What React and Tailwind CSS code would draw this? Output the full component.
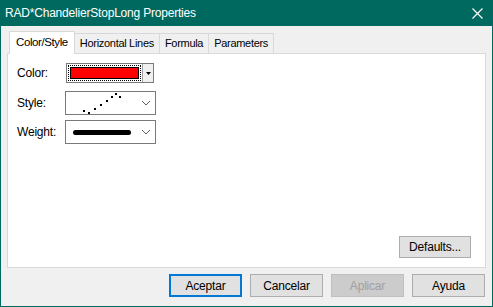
import React from "react";

const tabs = ["Color/Style", "Horizontal Lines", "Formula", "Parameters"];

const styleDots = [
  [2, 17],
  [7, 19],
  [13, 15],
  [19, 11],
  [25, 7],
  [30, 3],
  [34, 0],
  [38, 3],
];

function Chevron() {
  return (
    <svg width="10" height="6" viewBox="0 0 10 6" className="text-[#606060]">
      <path d="M1 1 L5 5 L9 1" fill="none" stroke="currentColor" strokeWidth="1" />
    </svg>
  );
}

function Btn({ children, primary, disabled }) {
  return (
    <button
      className={
        primary
          ? "w-[73px] h-[23px] border-2 border-[#0078d7] bg-[#e1e1e1] text-[12px] tracking-[-0.2px] text-black"
          : disabled
          ? "w-[73px] h-[23px] border border-[#bfbfbf] bg-[#cccccc] text-[12px] tracking-[-0.2px] text-[#a0a0a0]"
          : "w-[73px] h-[23px] border border-[#adadad] bg-[#e1e1e1] text-[12px] tracking-[-0.2px] text-black"
      }
    >
      {children}
    </button>
  );
}

export default function App() {
  return (
    <div
      className="w-[493px] h-[307px] flex flex-col bg-[#f0f0f0] overflow-hidden"
      style={{ fontFamily: '"Liberation Sans", Arial, sans-serif' }}
    >
      {/* Title bar */}
      <div className="h-[26px] shrink-0 bg-[#00695f] flex items-center justify-between pl-[5px] pr-[10px]">
        <span className="text-white text-[12px] tracking-[-0.2px]">RAD*ChandelierStopLong Properties</span>
        <svg width="11" height="11" viewBox="0 0 11 11">
          <path d="M0.5 0.5 L10.5 10.5 M10.5 0.5 L0.5 10.5" stroke="white" strokeWidth="1.2" />
        </svg>
      </div>

      {/* Body */}
      <div className="flex-1 flex flex-col border-x border-b border-[#00695f] px-[6px] pt-[5px] pb-[9px]">
        {/* Tabs */}
        <div className="flex items-end h-[22px] pl-[2px] relative z-10">
          {tabs.map((t, i) =>
            i === 0 ? (
              <div
                key={t}
                className="h-[23px] -mb-px px-[6px] bg-white border border-b-0 border-[#d9d9d9] flex items-center text-[11.5px] tracking-[-0.4px] text-black"
              >
                {t}
              </div>
            ) : (
              <div
                key={t}
                className="h-[20px] px-[5px] bg-[#f0f0f0] border border-l-0 border-b-0 border-[#d9d9d9] flex items-center text-[11px] tracking-[-0.3px] text-black"
              >
                {t}
              </div>
            )
          )}
        </div>

        {/* Panel */}
        <div className="flex-1 bg-white border border-[#d9d9d9] flex flex-col pl-[9px] pr-[14px] pt-[9px] pb-[9px]">
          <div className="flex flex-col gap-[5px]">
            <div className="flex items-center h-[20px]">
              <span className="w-[49px] text-[12px] tracking-[-0.2px] text-black">Color:</span>
              <div className="w-[88px] h-[20px] border border-[#7a7a7a] flex items-stretch bg-white">
                <div className="flex-1 border border-dotted border-black m-px p-px flex">
                  <div className="flex-1 bg-[#ff0000] border border-black" />
                </div>
                <div className="w-[11px] border-l border-[#a0a0a0] bg-[#f0f0f0] flex items-center justify-center">
                  <svg width="5" height="3" viewBox="0 0 5 3">
                    <path d="M0 0 H5 L2.5 3 Z" fill="black" />
                  </svg>
                </div>
              </div>
            </div>
            <div className="flex items-center h-[24px] mt-[3px]">
              <span className="w-[48px] text-[12px] tracking-[-0.2px] text-black">Style:</span>
              <div className="w-[91px] h-[24px] border border-[#7a7a7a] flex items-center justify-between pl-[15px] pr-[4px]">
                <svg width="42" height="21" viewBox="0 0 42 21">
                  {styleDots.map(([x, y], i) => (
                    <rect key={i} x={x} y={y} width="2" height="2" fill="black" />
                  ))}
                </svg>
                <Chevron />
              </div>
            </div>
            <div className="flex items-center h-[24px]">
              <span className="w-[48px] text-[12px] tracking-[-0.2px] text-black">Weight:</span>
              <div className="w-[91px] h-[24px] border border-[#7a7a7a] flex items-center justify-between pl-[7px] pr-[4px]">
                <div className="w-[58px] h-[5px] rounded-full bg-black" />
                <Chevron />
              </div>
            </div>
          </div>
          <div className="flex-1" />
          <div className="flex justify-end">
            <button className="w-[72px] h-[22px] border border-[#adadad] bg-[#e1e1e1] text-[12px] tracking-[-0.2px] text-black">
              Defaults...
            </button>
          </div>
        </div>

        {/* Bottom buttons */}
        <div className="flex justify-end gap-[8px] mt-[6px] pr-[1px]">
          <Btn primary>Aceptar</Btn>
          <Btn>Cancelar</Btn>
          <Btn disabled>Aplicar</Btn>
          <Btn>Ayuda</Btn>
        </div>
      </div>
    </div>
  );
}
